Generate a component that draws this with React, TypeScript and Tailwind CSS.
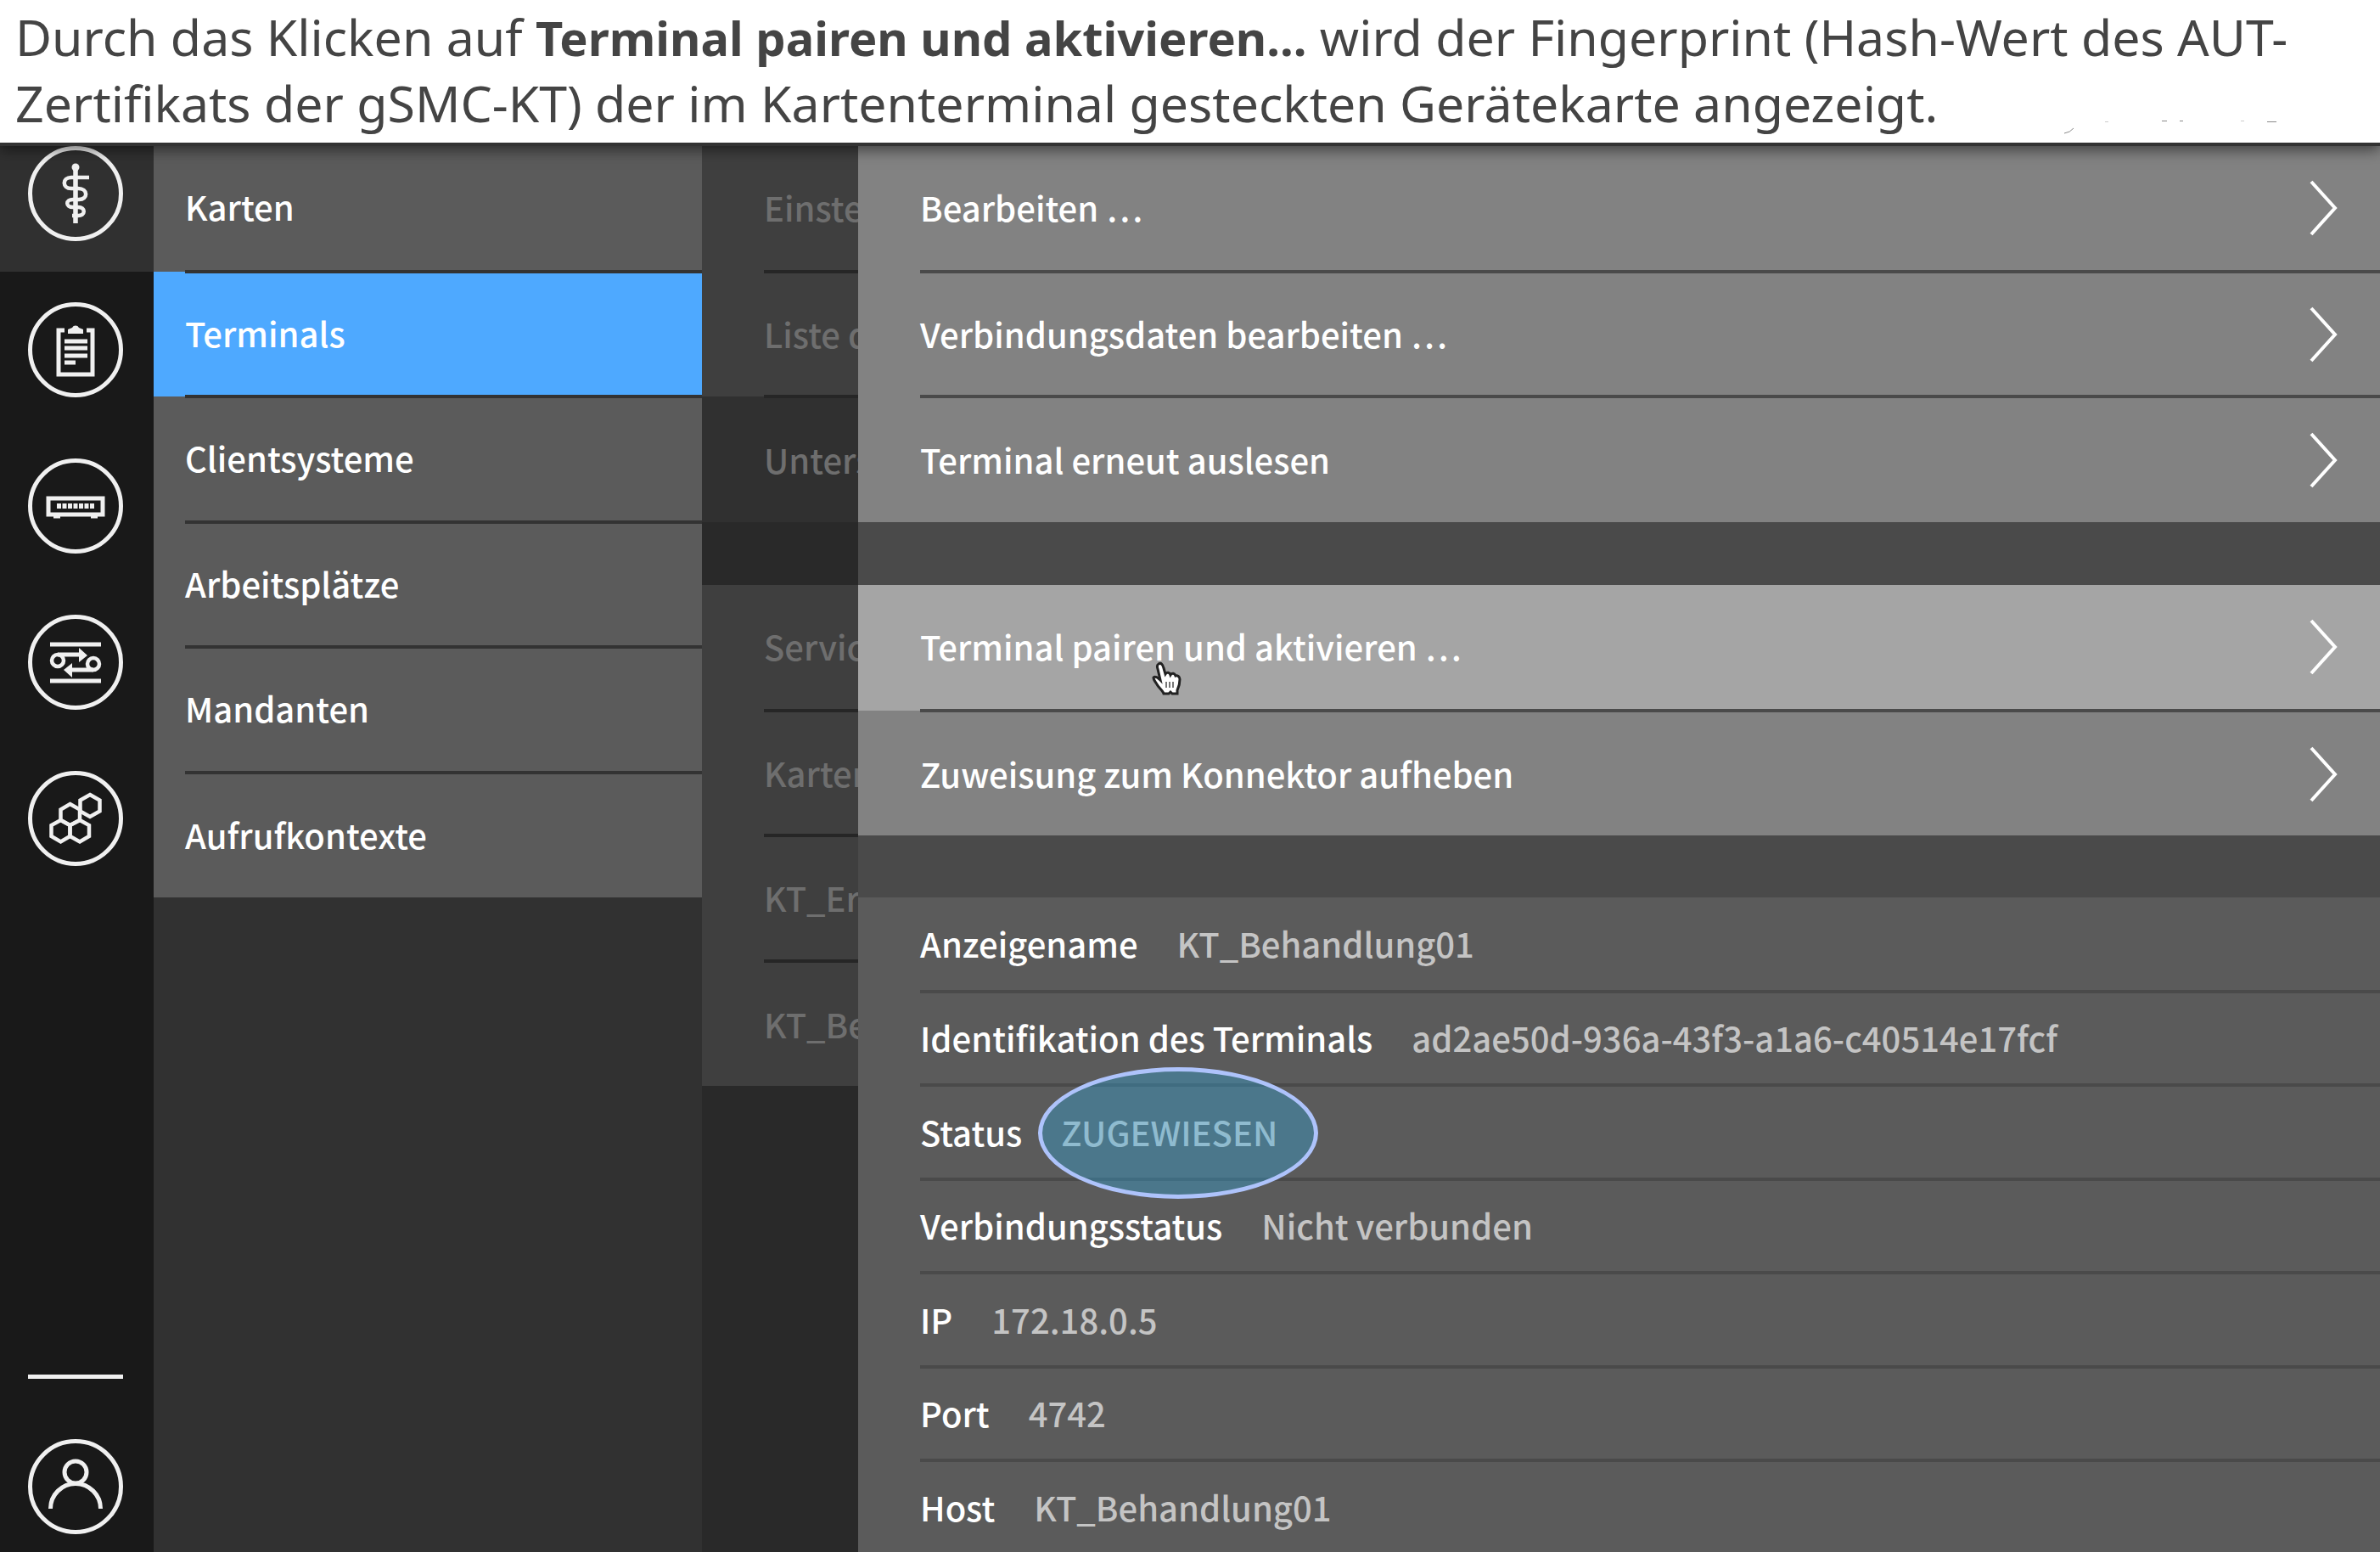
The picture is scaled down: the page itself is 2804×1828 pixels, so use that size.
import React from "react";

function Caduceus() {
  return (
    <svg viewBox="0 0 112 112" className="size-full" fill="none" stroke="currentColor" aria-hidden="true">
      <path d="M56 24V91" strokeWidth="5.5" />
      <circle cx="56" cy="25" r="4.5" fill="currentColor" stroke="none" />
      <path d="M72 37H51C40 37 40 50 51 50H59C71 50 71 63 60 63H53C44 63 44 72 53 72H59C68 72 68 82 59 82H52" strokeWidth="4.500" />
    </svg>
  );
}

function Clipboard() {
  return (
    <svg viewBox="0 0 112 112" className="size-full" fill="none" stroke="currentColor" aria-hidden="true">
      <path d="M43 33H36V85H76V33H69" strokeWidth="5" />
      <path d="M47 37V32L52 30A4.500 4.500 0 0 1 60 30L65 32V37Z" fill="currentColor" stroke="none" />
      <path d="M43 46H70M43 54H70M43 63H70M43 71H56" strokeWidth="5" />
    </svg>
  );
}

function Device() {
  return (
    <svg viewBox="0 0 112 112" className="size-full" fill="none" stroke="currentColor" aria-hidden="true">
      <rect x="24" y="47" width="64" height="19" strokeWidth="5" />
      <path d="M34 56H78" strokeWidth="6" strokeDasharray="5 1.500" />
      <path d="M30 69H38M74 69H82" strokeWidth="3" />
    </svg>
  );
}

function Exchange() {
  return (
    <svg viewBox="0 0 112 112" className="size-full" fill="none" stroke="currentColor" aria-hidden="true">
      <path d="M26 35H86M26 78H86" strokeWidth="5" />
      <circle cx="35" cy="54" r="7" strokeWidth="4.500" />
      <circle cx="77" cy="58" r="7" strokeWidth="4.500" />
      <path d="M35 47H62M77 65H50" strokeWidth="5" />
      <path d="M60 39L70 48L60 56ZM52 57L42 65L52 74Z" fill="currentColor" stroke="none" />
    </svg>
  );
}

function Hexagons() {
  return (
    <svg viewBox="0 0 112 112" className="size-full" fill="none" stroke="currentColor" strokeWidth="4.500" aria-hidden="true">
      <path d="M73 28L84.500 34.500V47.500L73 54L61.500 47.500V34.500Z" />
      <path d="M49.500 39L61 45.500V58L49.500 64L38.500 58V45.500Z" />
      <path d="M38.500 58L49.500 64V77L38.500 83.500L27.500 77V64Z" />
      <path d="M61 58L72 64V77L61 83.500L49.500 77V64Z" />
    </svg>
  );
}

function Person() {
  return (
    <svg viewBox="0 0 112 112" className="size-full" fill="none" stroke="currentColor" strokeWidth="5" aria-hidden="true">
      <circle cx="56" cy="39" r="13" />
      <path d="M26.500 82A29.500 29.500 0 0 1 85.500 82" />
    </svg>
  );
}

const railItems = [
  { label: "Praxis", icon: <Caduceus />, active: true },
  { label: "Protokoll", icon: <Clipboard />, active: false },
  { label: "System", icon: <Device />, active: false },
  { label: "Netzwerk", icon: <Exchange />, active: false },
  { label: "Module", icon: <Hexagons />, active: false },
];

function RailButton({ label, children }: { label: string; children: React.ReactNode }) {
  return (
    <button type="button" aria-label={label} className="relative block size-28 text-[#f0f0f0]">
      <span className="absolute inset-0 rounded-full border-5 border-[#f0f0f0]" />
      {children}
    </button>
  );
}

function Rail() {
  return (
    <nav aria-label="Hauptnavigation" className="flex w-[181px] shrink-0 flex-col bg-[#191919]">
      {railItems.map((item) => (
        <div key={item.label} className={item.active ? "bg-[#303030] pb-9 pl-[33px]" : "py-9 pl-[33px]"}>
          <RailButton label={item.label}>{item.icon}</RailButton>
        </div>
      ))}
      <div className="mt-auto flex flex-col gap-[71px] pb-[21px] pl-[33px]">
        <hr className="h-[5px] w-28 border-0 bg-[#f0f0f0]" />
        <RailButton label="Benutzer">
          <Person />
        </RailButton>
      </div>
    </nav>
  );
}

const menuItems = ["Karten", "Terminals", "Clientsysteme", "Arbeitsplätze", "Mandanten", "Aufrufkontexte"];

function Menu() {
  return (
    <nav aria-label="Praxis" className="w-[646px] shrink-0 bg-[#313131]">
      <ul className="bg-[#5b5b5b]">
        {menuItems.map((item) => (
          <li
            key={item}
            className={
              item === "Terminals"
                ? "group flex h-[147px] bg-[#4ea9ff] pl-[37px]"
                : "group flex h-[147px] pl-[37px] odd:h-[148px]"
            }
          >
            <a
              href="#"
              className="flex flex-1 items-center border-y-2 border-[#333333] pb-1 font-medium text-white group-first:border-t-0 group-last:border-b-0"
            >
              {item}
            </a>
          </li>
        ))}
      </ul>
    </nav>
  );
}

function DimRow({ label, dark = false }: { label: string; dark?: boolean }) {
  return (
    <li className={dark ? "group flex h-[148px] bg-[#303030] pl-[73px]" : "group flex h-[147px] pl-[73px] odd:h-[148px]"}>
      <span className="flex min-w-0 flex-1 items-center overflow-hidden border-y-2 border-[#262626] pb-0.5 font-medium whitespace-nowrap text-[#6e6e6e] group-first:border-t-0 group-last:border-b-0">
        {label}
      </span>
    </li>
  );
}

function DimmedColumn() {
  return (
    <div className="w-[184px] shrink-0 overflow-hidden bg-[#292929]">
      <ul className="bg-[#3f3f3f]">
        <DimRow label="Einste" />
        <DimRow label="Liste d" />
        <DimRow label="Unters" dark />
      </ul>
      <ul className="mt-[74px] bg-[#3f3f3f]">
        <DimRow label="Servic" />
        <DimRow label="Karten" />
        <DimRow label="KT_Er" />
        <DimRow label="KT_Be" />
      </ul>
    </div>
  );
}

function Chevron() {
  return (
    <svg viewBox="0 0 34 66" className="h-[66px] w-[34px]" fill="none" stroke="white" strokeWidth="4" aria-hidden="true">
      <path d="M2 2L30 33L2 64" />
    </svg>
  );
}

function ActionRow({ label, hovered = false, children }: { label: string; hovered?: boolean; children?: React.ReactNode }) {
  return (
    <li className={hovered ? "group flex h-[148px] bg-[#a5a5a5] pl-[73px]" : "group flex h-[147px] bg-[#828282] pl-[73px] odd:h-[148px]"}>
      <button
        type="button"
        className="relative flex flex-1 items-center justify-between border-y-2 border-[#4a4a4a] pr-[49px] text-left font-medium text-white group-first:border-t-0 group-last:border-b-0"
      >
        <span className="pb-0.5">{label}</span>
        <Chevron />
        {children}
      </button>
    </li>
  );
}

function HandCursor() {
  return (
    <svg viewBox="0 0 36 42" className="absolute top-[90px] left-[272px] h-[42px] w-9" aria-hidden="true">
      <path
        d="M9 3C12 1 14 4 15 8L17 15C19 12 22 13 23 16C25 13 28 14 29 17C31 16 34 18 34 21C34 28 33 30 31 34V38H25L23 36L21 38H15C14 34 9 31 7 27C5 24 3 22 3 19C5 17 8 19 11 22L8 9C7 6 7 4 9 3Z"
        fill="white"
        stroke="#222222"
        strokeWidth="3"
      />
      <path d="M18 24V31M22 24V31M26 24V31" stroke="#777777" strokeWidth="2" />
    </svg>
  );
}

const details = [
  ["Anzeigename", "KT_Behandlung01"],
  ["Identifikation des Terminals", "ad2ae50d-936a-43f3-a1a6-c40514e17fcf"],
  ["Status", "ZUGEWIESEN"],
  ["Verbindungsstatus", "Nicht verbunden"],
  ["IP", "172.18.0.5"],
  ["Port", "4742"],
  ["Host", "KT_Behandlung01"],
];

function Panel() {
  return (
    <main className="min-w-0 flex-1 bg-[#4a4a4a]">
      <ul>
        <ActionRow label="Bearbeiten …" />
        <ActionRow label="Verbindungsdaten bearbeiten …" />
        <ActionRow label="Terminal erneut auslesen" />
      </ul>
      <ul className="mt-[74px]">
        <ActionRow label="Terminal pairen und aktivieren …" hovered>
          <HandCursor />
        </ActionRow>
        <ActionRow label="Zuweisung zum Konnektor aufheben" />
      </ul>
      <dl className="mt-[73px] bg-[#5b5b5b] pl-[73px]">
        {details.map(([term, value]) => (
          <div key={term} className="flex h-[111px] items-center gap-[46px] border-y-2 border-[#4a4a4a] pb-0.5 first:border-t-0 even:h-[110px]">
            <dt className="font-medium text-white">{term}</dt>
            <dd className="relative font-medium text-[#c4c4c4]">
              {value}
              {term === "Status" && (
                <span className="absolute -top-[46px] -left-[27px] h-[155px] w-[330px] rounded-[50%] border-5 border-[#aec3fb] bg-[#2dabe4]/35" />
              )}
            </dd>
          </div>
        ))}
      </dl>
    </main>
  );
}

function InkSpecks() {
  return (
    <svg viewBox="0 0 260 20" className="absolute right-[114px] bottom-2 h-5 w-[260px]" fill="none" stroke="#8a8a8a" aria-hidden="true">
      <path d="M2 17Q9 16 13 11" />
      <path d="M117 2.500H123M138 2.500H142M241 3.500H252" strokeWidth="1" />
      <path d="M210 2.500H214M50 3.500H54" stroke="#cccccc" />
    </svg>
  );
}

export default function App() {
  return (
    <div className="flex h-screen flex-col overflow-hidden bg-[#313131]">
      <header className="relative z-10 border-b-4 border-[#333333] bg-white pt-1 pb-2 pl-[18px] shadow-[0_4px_16px_rgba(0,0,0,0.55)]">
        <p className="font-['Noto_Sans',sans-serif] text-[59px] leading-[78px] text-[#444444]">
          Durch das Klicken auf <strong className="text-[56px] leading-none font-bold">Terminal pairen und aktivieren...</strong> wird der Fingerprint (Hash-Wert des AUT-
          <br />
          Zertifikats der gSMC-KT) der im Kartenterminal gesteckten Gerätekarte angezeigt.
        </p>
        <InkSpecks />
      </header>
      <div className="flex min-h-0 flex-1 font-['Noto_Sans_CJK_SC','Noto_Sans',sans-serif] text-[40px] leading-[60px]">
        <Rail />
        <Menu />
        <DimmedColumn />
        <Panel />
      </div>
    </div>
  );
}
